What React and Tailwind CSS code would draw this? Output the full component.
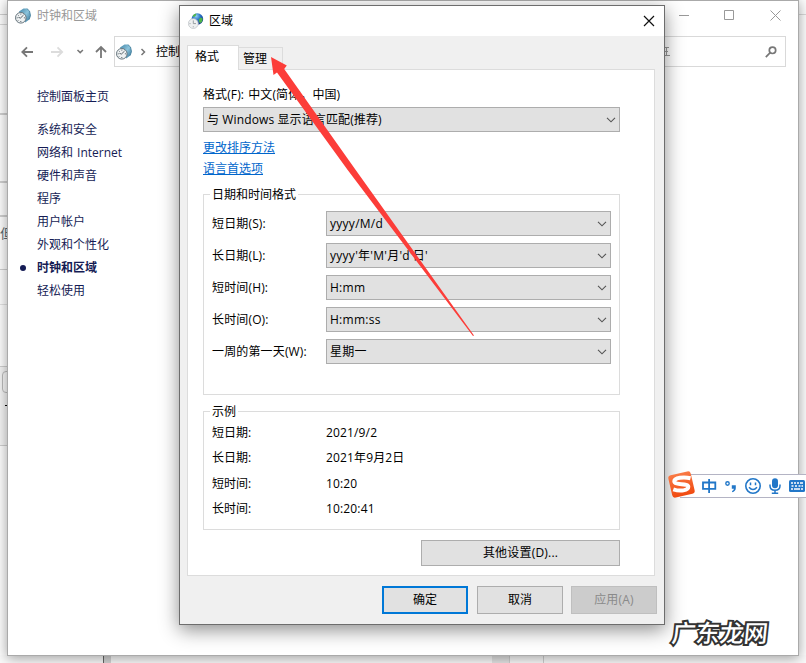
import React from "react";

const sideLinks = [
  { name: "系统和安全" },
  { name: "网络和 Internet" },
  { name: "硬件和声音" },
  { name: "程序" },
  { name: "用户帐户" },
  { name: "外观和个性化" },
  { name: "时钟和区域", active: true },
  { name: "轻松使用" },
];

const formats = [
  { label: "短日期(S):", value: "yyyy/M/d" },
  { label: "长日期(L):", value: "yyyy'年'M'月'd'日'" },
  { label: "短时间(H):", value: "H:mm" },
  { label: "长时间(O):", value: "H:mm:ss" },
  { label: "一周的第一天(W):", value: "星期一" },
];

const examples = [
  { label: "短日期:", value: "2021/9/2" },
  { label: "长日期:", value: "2021年9月2日" },
  { label: "短时间:", value: "10:20" },
  { label: "长时间:", value: "10:20:41" },
];

const ClockIcon = ({ className = "" }) => (
  <svg className={className} width="16" height="16" viewBox="0 0 16 16">
    <defs>
      <linearGradient id="clockBack" x1="0" y1="0" x2="1" y2="1">
        <stop offset="0" stopColor="#3f83a6" />
        <stop offset="0.5" stopColor="#8cc4dc" />
        <stop offset="1" stopColor="#2c6d92" />
      </linearGradient>
    </defs>
    <path d="M4 3.500 8.500.6l3.300-.2L14.500 3l1 4.500-1.300 4-4 3z" fill="url(#clockBack)" />
    <path d="M11.800.5 14.500 3l1 4.500-1.300 4" fill="none" stroke="#3b7897" strokeWidth="0.8" />
    <circle cx="5.8" cy="9.8" r="5.3" fill="#eef1f2" stroke="#66747c" />
    <path d="M5.8 5.6v1M5.8 13v1M1.7 9.8h1M8.9 9.8h1M3 7l.6.6M8.6 7 5.5 10l-2-.6M3 12.6l.6-.6" fill="none" stroke="#46535b" strokeWidth="0.9" />
  </svg>
);

const RegionIcon = () => (
  <svg width="16" height="16" viewBox="0 0 16 16">
    <defs>
      <radialGradient id="globe" cx="0.4" cy="0.25" r="0.8">
        <stop offset="0" stopColor="#8fd0f2" />
        <stop offset="0.45" stopColor="#2870c4" />
        <stop offset="1" stopColor="#0b2a80" />
      </radialGradient>
    </defs>
    <circle cx="9.4" cy="6" r="5.8" fill="url(#globe)" />
    <path d="M4.500 3.300C5.500 1.500 7 .6 8.500.5L7.800 2.500 6 4zM10.800 6.500 12.500 4.500l2.200.9-.6 3.300-2.200 1.600-1.100-2z" fill="#4fb548" />
    <circle cx="5.300" cy="10.600" r="4.900" fill="#eef0f1" stroke="#c0c5c9" strokeWidth="0.8" />
    <path d="M5.300 7.400v3.200h2.700M5.300 13.300v1M1.500 10.600h1" fill="none" stroke="#8f969b" strokeWidth="0.9" />
  </svg>
);

const Chevron = () => (
  <svg width="10" height="6" viewBox="0 0 10 6" className="shrink-0">
    <path d="M1 .8 5 4.800 9 .8" fill="none" stroke="#555" strokeWidth="1.100" />
  </svg>
);

const Select = ({ value, className = "" }) => (
  <button
    type="button"
    className={`flex h-[25px] items-center justify-between border border-[#adadad] bg-[#e1e1e1] pl-[3px] pr-[3px] text-left ${className}`}
  >
    <span className="whitespace-nowrap">{value}</span>
    <Chevron />
  </button>
);

const Group = ({ title, className = "", children }) => (
  <section className={`flex w-[417px] flex-col border border-[#dcdcdc] ${className}`}>
    <h2 className="-mt-[9px] ml-1.5 h-[17px] self-start bg-white px-0.5 leading-[17px]">{title}</h2>
    {children}
  </section>
);

// Whatever is left visible of the pages behind the windows
const Backdrop = () => (
  <div className="flex h-full flex-col justify-between">
    <div className="flex h-[446px]">
      <div className="w-2">
        <div className="h-[15px] border-b border-[#d0d0d0]" />
        <div className="h-[10px] border-b border-[#d8d8d8]" />
        <div className="h-[90px] border-b-2 border-[#cfcfcf]" />
        <div className="h-[68px] border-b-2 border-[#cfcfcf]" />
        <div className="h-[34px] border-b-2 border-[#cfcfcf]" />
        <div className="h-[53px] border-b border-[#cfcfcf] pt-[7px]">
          <span className="block w-3 text-[13px] leading-[18px] text-[#5c6a70]">但</span>
        </div>
        <div className="h-[35px] border-b border-[#e2e2e2]" />
        <div className="h-[62px] border-b border-[#cfcfcf]" />
        <div className="h-[79px] border-b border-[#cfcfcf] bg-[#f4f4f4] pt-1">
          <div className="ml-0.5 h-[22px] w-4 rounded-sm border border-[#bbb] bg-[#f8f8f8]" />
          <div className="mt-3 ml-[5px] h-px bg-black" />
        </div>
      </div>
      <div className="ml-auto h-[15px] w-2 border-b border-[#dadada]" />
    </div>
    <div className="flex h-2">
      <div className="w-[104px] border-r border-[#666] bg-[#fafafa]" />
      <div className="w-[7px] bg-[#d4d4d4]" />
      <div className="w-[381px] bg-[#fafafa]" />
      <div className="w-[17px] bg-[#e4e4e4]" />
      <div className="w-[35px] border-x border-[#cfcfcf] bg-[#fafafa]" />
      <div className="flex-1 bg-[#fafafa]" />
    </div>
  </div>
);

const ControlPanelWindow = () => (
  <div className="absolute top-0 left-[7px] flex h-[656px] w-[792px] flex-col border border-[#aaa] bg-white shadow-[0_2px_12px_rgba(0,0,0,0.38)]">
    <div className="flex h-[30px] items-center pl-[7px] text-[#999]">
      <ClockIcon />
      <span className="ml-1.5">时钟和区域</span>
      <svg className="ml-auto mr-[17px]" width="102" height="12" viewBox="0 0 102 12" fill="none" stroke="#999">
        <path d="M0 5.500h10M45.500.5h9v9h-9zM91.500.5l10 10M101.500.5l-10 10" />
      </svg>
    </div>
    <div className="mt-[5px] flex h-[31px] items-center pr-3">
      <svg width="106" height="16" viewBox="0 0 106 16" fill="none" strokeWidth="1.800" className="shrink-0">
        <path d="M25 8H14.500M19 3.300 14.300 8 19 12.700" stroke="#777" />
        <path d="M43 8h11M49.500 3.300 54.200 8l-4.700 4.700" stroke="#dcdcdc" />
        <path d="M69.500 6l2.700 2.600L74.900 6" stroke="#777" strokeWidth="1.500" />
        <path d="M93 14V3M88 8l5-5 5 5" stroke="#777" />
      </svg>
      <div className="flex h-[31px] w-[540px] items-center border border-[#d9d9d9] pl-px">
        <ClockIcon />
        <svg width="7" height="8" viewBox="0 0 7 8" className="ml-2" fill="none" stroke="#777" strokeWidth="1.500">
          <path d="M1.500 1 4.500 4 1.500 7" />
        </svg>
        <span className="ml-[9px] w-6 overflow-hidden whitespace-nowrap text-black">控制</span>
      </div>
      <div className="ml-[-1px] flex h-[31px] flex-1 items-center border border-[#d9d9d9] pr-2">
        <svg className="ml-[10px]" width="6" height="10" viewBox="0 0 6 10" stroke="#999">
          <path d="M0 .5h5M0 4.500h4M0 8.500h6M2.500.5v8" />
        </svg>
        <svg className="ml-auto" width="12" height="12" viewBox="0 0 12 12" fill="none" stroke="#777" strokeWidth="1.700">
          <circle cx="7.500" cy="4.300" r="3.200" />
          <path d="M5.200 6.700.8 11.200" />
        </svg>
      </div>
    </div>
    <nav className="mt-[18px] ml-[29px] text-[#151c55]">
      <a className="mb-[10px] block h-[23px] leading-[23px]">控制面板主页</a>
      <ul>
        {sideLinks.map((link) => (
          <li
            key={link.name}
            className={`flex h-[23px] items-center leading-[23px] ${link.active ? "font-bold" : ""}`}
          >
            {link.active && <span className="-ml-[17px] mr-[11px] h-1.5 w-1.5 rounded-full bg-[#151c55]" />}
            {link.name}
          </li>
        ))}
      </ul>
    </nav>
  </div>
);

const RegionDialog = () => (
  <div className="absolute top-[5px] left-[179px] flex h-[620px] w-[486px] flex-col border border-[#6d6d6d] bg-[#f0f0f0] shadow-[0_5px_18px_rgba(0,0,0,0.45)]">
    <div className="flex h-[30px] items-center bg-white pr-[9px] pl-2">
      <RegionIcon />
      <span className="ml-[5px]">区域</span>
      <svg className="ml-auto" width="12" height="12" viewBox="0 0 12 12" stroke="#111" strokeWidth="1.200">
        <path d="M1 1l10 10M11 1 1 11" />
      </svg>
    </div>

    {/* Tabs */}
    <div className="mt-[9px] ml-[7px] flex h-6 items-end">
      <button className="relative z-10 -mb-px h-[25px] w-[52px] self-start border border-b-0 border-[#dcdcdc] bg-white pr-3 pb-0.5 text-center whitespace-nowrap">
        格式
      </button>
      <button className="h-[22px] w-[44px] border border-b-0 border-l-0 border-[#dcdcdc] pr-[11px] whitespace-nowrap">
        管理
      </button>
    </div>

    {/* Format page */}
    <div className="ml-[7px] flex h-[507px] w-[468px] flex-col border border-[#dcdcdc] bg-white pt-4 pl-[15px]">
      <p className="h-[21px] leading-[17px] tracking-[0.1px]">
        格式(F): 中文(简体，中国)
      </p>
      <Select className="w-[417px] tracking-[0.12px]" value="与 Windows 显示语言匹配(推荐)" />
      <a className="mt-[5px] h-[21px] self-start leading-[21px] text-[#0066cc] underline">更改排序方法</a>
      <a className="h-[21px] self-start leading-[21px] text-[#0066cc] underline">语言首选项</a>

      <Group title="日期和时间格式" className="mt-[15px] h-[201px]">
        <div className="mt-[8px] ml-2 flex flex-col gap-[7px]">
          {formats.map((item) => (
            <label key={item.label} className="flex items-center">
              <span className="w-[114px] whitespace-nowrap tracking-[0.15px]">{item.label}</span>
              <Select className="w-[285px] tracking-[0.27px]" value={item.value} />
            </label>
          ))}
        </div>
      </Group>

      <Group title="示例" className="mt-4 h-[119px]">
        <dl className="ml-2">
          {examples.map((item) => (
            <div key={item.label} className="flex h-[25.5px] items-center">
              <dt className="w-[114px]">{item.label}</dt>
              <dd className="tracking-[0.15px]">{item.value}</dd>
            </div>
          ))}
        </dl>
      </Group>

      <button className="mt-[10px] ml-[218px] h-[26px] w-[199px] border border-[#adadad] bg-[#e1e1e1] tracking-[0.2px]">
        其他设置(D)...
      </button>
    </div>

    {/* Footer */}
    <div className="mt-[10px] flex justify-end pr-[7px]">
      <button className="h-7 w-[86px] border-2 border-[#0078d7] bg-[#e1e1e1]">确定</button>
      <button className="ml-[9px] h-7 w-[86px] border border-[#adadad] bg-[#e1e1e1]">取消</button>
      <button className="ml-2 h-7 w-[86px] border border-[#bfbfbf] bg-[#cccccc] tracking-[0.2px] text-[#8a8a8a]" disabled>
        应用(A)
      </button>
    </div>
  </div>
);

const InputBar = () => (
  <div className="absolute top-[474px] left-[680px] flex h-6 w-[126px] items-center border-y border-[#b4b4c4] bg-white">
    <svg className="-ml-3 shrink-0 -translate-x-px -translate-y-px" width="30" height="30" viewBox="0 0 30 30">
      <defs>
        <linearGradient id="sogou" x1="0" y1="0" x2="0" y2="1">
          <stop offset="0" stopColor="#f97a45" />
          <stop offset="1" stopColor="#f04a10" />
        </linearGradient>
      </defs>
      <rect x="3" y="3" width="23" height="23" rx="3" fill="url(#sogou)" transform="rotate(-13 14.500 14.500)" />
      <path d="M23.500 8.300C17 6.500 7.300 7.600 7.300 11.300c0 4.300 14 1.600 14 5.500 0 3.700-8 5-15 2.500" fill="none" stroke="#fff" strokeWidth="4" />
    </svg>
    <svg className="shrink-0" width="108" height="20" viewBox="0 0 108 20" fill="none" stroke="#2277c8" strokeWidth="1.800">
      <path d="M5 6.500h12.300v6.300H5zM11.100 3v14" />
      <circle cx="29.500" cy="7.500" r="1.700" strokeWidth="1.400" />
      <path d="M33.800 9.200h4v3q-.2 3-3.700 4v-1.200q1.800-.8 1.800-2.200h-2.100z" fill="#2277c8" stroke="none" />
      <circle cx="55" cy="10" r="7.200" strokeWidth="1.600" />
      <path d="M52.500 6.500v2.800M57.500 6.500v2.800M51 11.200q4 4.500 8 0" strokeWidth="1.500" />
      <rect x="74" y="2.200" width="6" height="10" rx="3" fill="#2277c8" stroke="none" />
      <path d="M72 8.500v1.300q0 4.500 5 4.500t5-4.500V8.500M77 14v3M73.800 17.300h6.400" strokeWidth="1.500" />
      <rect x="91" y="4" width="16" height="12" rx="1.500" fill="#2277c8" stroke="none" />
      <path d="M93 7h2M96 7h2M99 7h2M102 7h3M93.500 10h2M97 10h2M100.500 10h2M103.500 10h1.500M93 13h2M96 13h6M103 13h2" stroke="#fff" strokeWidth="1.400" />
    </svg>
  </div>
);

const App = () => {
  return (
    <div className="relative h-[663px] w-[806px] overflow-hidden bg-[#fdfdfd] font-['Open_Sans','Noto_Sans_CJK_SC',sans-serif] text-xs leading-4 text-black [word-spacing:1px]">
      <Backdrop />
      <ControlPanelWindow />
      <RegionDialog />
      <InputBar />

      {/* Arrow to the admin tab */}
      <svg className="pointer-events-none absolute top-0 left-0" width="806" height="663" viewBox="0 0 806 663">
        <path d="M271 57 286.800 65.500 284.200 69 355.700 170 474 335.500 473 336 347.700 170 277 72.500 273.500 75z" fill="#fc3d39" />
      </svg>

      <div className="absolute top-[618px] left-[672px] -skew-x-6 text-[24px] leading-[30px] font-medium whitespace-nowrap text-white [-webkit-text-stroke:4px_#333] [paint-order:stroke]">
        广东龙网
      </div>
    </div>
  );
};

export default App;
